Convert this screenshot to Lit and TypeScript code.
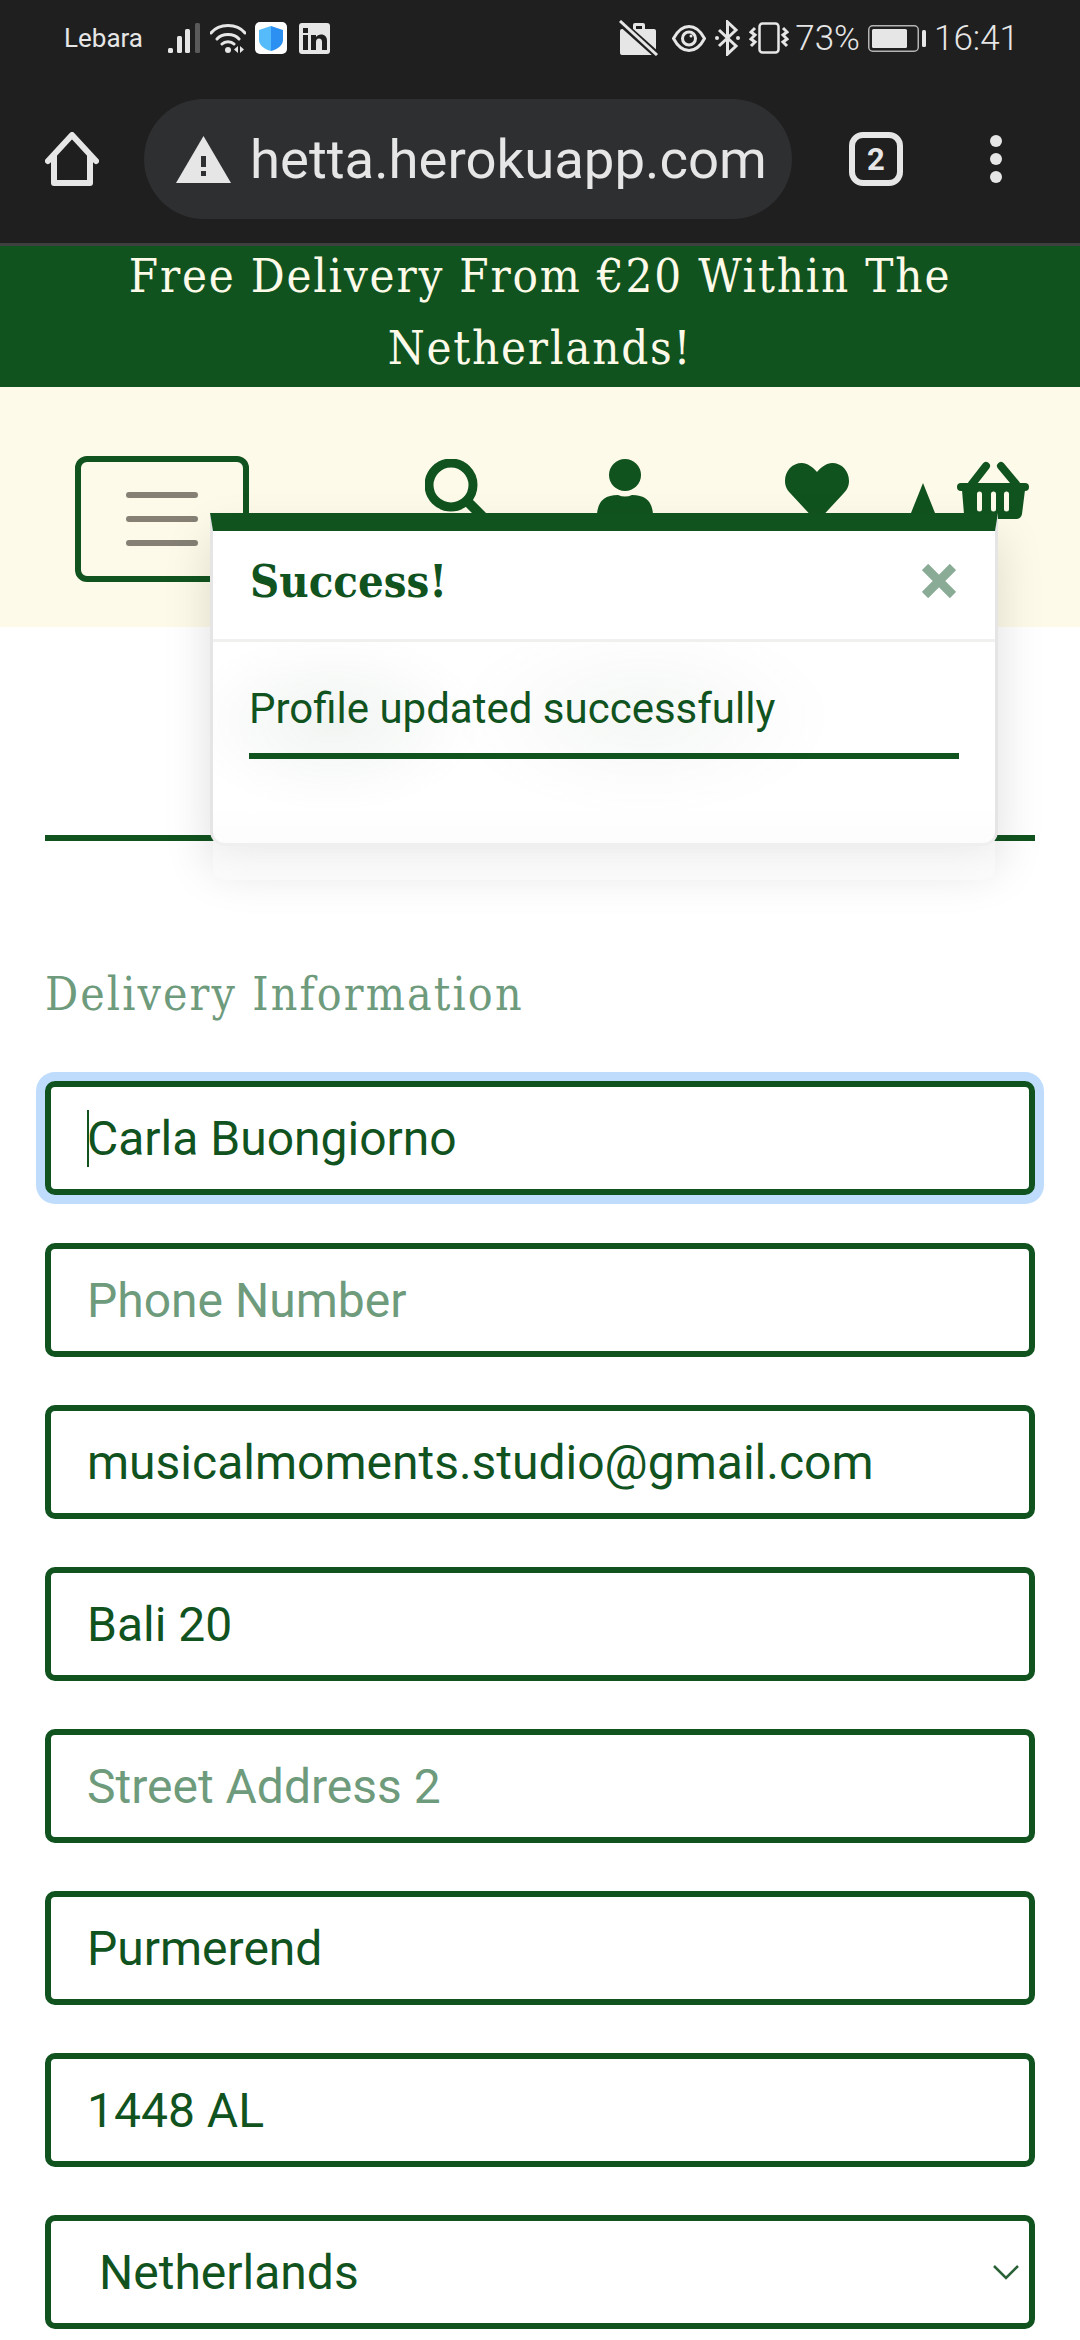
import {LitElement, css, html} from 'lit';
import {customElement} from 'lit/decorators.js';

const fields = [
  {value: 'Carla Buongiorno', placeholder: 'Full Name', focused: true},
  {value: '', placeholder: 'Phone Number'},
  {value: 'musicalmoments.studio@gmail.com', placeholder: 'Email Address'},
  {value: 'Bali 20', placeholder: 'Street Address 1'},
  {value: '', placeholder: 'Street Address 2'},
  {value: 'Purmerend', placeholder: 'Town or City'},
  {value: '1448 AL', placeholder: 'Postal Code'},
];

@customElement('app-root')
export class AppRoot extends LitElement {
  static get styles() {
    return [
      css`
        :host {
          background: #fff;
          color: #11531f;
          display: block;
          font-family: Roboto, 'Liberation Sans', sans-serif;
          height: 2340px;
          overflow: hidden;
          position: relative;
          width: 1080px;
        }
        svg {
          display: block;
          flex: none;
        }
        .chrome {
          background: #1f1f1f;
          border-bottom: 3px solid #3d3f3e;
          color: #e6e6e6;
          height: 243px;
        }
        .status {
          align-items: center;
          display: flex;
          height: 76px;
          padding-left: 64px;
        }
        .carrier {
          font-size: 26px;
          margin-right: 25px;
        }
        .spacer {
          flex: 1;
        }
        .status-text {
          font-size: 35px;
          font-weight: 300;
        }
        .percent {
          margin-left: 6px;
        }
        .clock {
          margin: 0 61px 0 8px;
        }
        .battery {
          margin-left: 8px;
        }
        .gap-9 {
          margin-left: 9px;
        }
        .gap-10 {
          margin-left: 10px;
        }
        .gap-12 {
          margin-left: 12px;
        }
        .gap-13 {
          margin-left: 13px;
        }
        .toolbar {
          align-items: center;
          display: flex;
          height: 120px;
          margin-top: 23px;
          padding-left: 45px;
        }
        .pill {
          align-items: center;
          background: #2e2f31;
          border-radius: 60px;
          box-sizing: border-box;
          display: flex;
          font-size: 54.500px;
          height: 120px;
          margin-left: 45px;
          padding-left: 32px;
          width: 648px;
        }
        .url {
          margin-left: 19px;
        }
        .tabs {
          align-items: center;
          border: 6px solid #e6e6e6;
          border-radius: 14px;
          box-sizing: border-box;
          display: flex;
          font-size: 31px;
          font-weight: 700;
          height: 54px;
          justify-content: center;
          margin-left: 57px;
          width: 54px;
        }
        .more {
          display: flex;
          flex-direction: column;
          gap: 6px;
          margin-left: 87px;
        }
        .more span {
          background: #e6e6e6;
          border-radius: 50%;
          height: 12px;
          width: 12px;
        }
        .banner {
          background: #11531f;
          color: #fefae9;
          font-family: 'DejaVu Serif Condensed', 'DejaVu Serif', serif;
          font-size: 47px;
          height: 141px;
          letter-spacing: 1.8px;
          line-height: 72px;
          overflow: hidden;
          text-align: center;
        }
        .banner div {
          margin-top: -6px;
        }
        .nav {
          background: #fefae9;
          box-sizing: border-box;
          display: flex;
          height: 240px;
          padding: 69px 0 0 75px;
        }
        .menu {
          align-items: center;
          border: 6px solid #11531f;
          border-radius: 12px;
          box-sizing: border-box;
          display: flex;
          flex-direction: column;
          flex: none;
          gap: 18px;
          height: 126px;
          justify-content: center;
          width: 174px;
        }
        .menu span {
          background: #857f74;
          border-radius: 3px;
          height: 6px;
          width: 72px;
        }
        .nav-icon {
          margin-top: 3px;
        }
        .nav-search {
          margin-left: 176px;
        }
        .nav-person {
          margin-left: 106px;
        }
        .nav-heart {
          margin-left: 132px;
        }
        .nav-arrow {
          margin-left: 62px;
        }
        .nav-basket {
          margin-left: 22px;
        }
        main {
          padding: 208px 45px 0;
        }
        .rule {
          background: #11531f;
          height: 6px;
        }
        h2 {
          color: #6f9b7d;
          font-family: 'DejaVu Serif Condensed', 'DejaVu Serif', serif;
          font-size: 46px;
          font-weight: 400;
          letter-spacing: 2.100px;
          line-height: 60px;
          margin: 123px 0 0;
        }
        form {
          display: flex;
          flex-direction: column;
          gap: 48px;
          margin-top: 57px;
        }
        .field {
          position: relative;
        }
        input,
        select {
          appearance: none;
          background: #fff;
          border: 6px solid #11531f;
          border-radius: 10px;
          box-sizing: border-box;
          color: #11531f;
          display: block;
          font-family: inherit;
          font-size: 48px;
          height: 114px;
          outline: none;
          padding: 0 36px;
          width: 100%;
        }
        input::placeholder {
          color: #6f9b7d;
          opacity: 1;
        }
        .focused {
          box-shadow: 0 0 0 9px #bfdcfd;
        }
        .caret {
          background: #11531f;
          height: 57px;
          left: 42px;
          position: absolute;
          top: 29px;
          width: 2px;
        }
        select {
          padding-left: 48px;
        }
        .chevron {
          position: absolute;
          right: 16px;
          top: 49px;
        }
        .toast {
          background: #fff;
          border: 3px solid rgba(0, 0, 0, .1);
          border-radius: 0 0 15px 15px;
          border-top: 18px solid #11531f;
          box-shadow: 0 24px 48px rgba(0, 0, 0, .13);
          box-sizing: border-box;
          height: 333px;
          left: 210px;
          position: absolute;
          top: 513px;
          width: 788px;
        }
        .toast-head {
          align-items: center;
          border-bottom: 3px solid #f0f0ee;
          box-sizing: border-box;
          display: flex;
          height: 111px;
          justify-content: space-between;
          padding: 0 39px 8px 37px;
        }
        .toast-head strong {
          font-family: 'DejaVu Serif Condensed', 'DejaVu Serif', serif;
          font-size: 45px;
          font-weight: 700;
        }
        .toast-body {
          background:
            radial-gradient(ellipse 150px 90px at 120px 80px, rgba(17, 83, 31, .06), transparent),
            radial-gradient(ellipse 190px 100px at 430px 75px, rgba(17, 83, 31, .045), transparent),
            linear-gradient(transparent 70%, #fafafa);
          border-radius: 0 0 12px 12px;
          height: 201px;
          padding: 37px 36px 0;
        }
        .toast-text {
          font-size: 42px;
          line-height: 60px;
        }
        .toast-bar {
          background: #11531f;
          height: 6px;
          margin-top: 14px;
        }
      `,
    ];
  }

  render() {
    return html`
      <div class="chrome">
        <div class="status">
          <span class="carrier">Lebara</span>
          ${this.leftStatusIcons()}
          <span class="spacer"></span>
          ${this.rightStatusIcons()}
        </div>
        <div class="toolbar">
          <svg width="54" height="54" viewBox="0 0 54 54" fill="none" stroke="#e6e6e6" stroke-width="6" stroke-linejoin="round" stroke-linecap="round">
            <path d="M3 29 27 3l24 26M9 24v27h36V24"/>
          </svg>
          <div class="pill">
            <svg width="55" height="47" viewBox="0 0 55 47">
              <path fill="#e6e6e6" d="M27.500 0 55 47H0Z"/>
              <path fill="#2e2f31" d="M25 20h5v11h-5zM25 35h5v5h-5z"/>
            </svg>
            <span class="url">hetta.herokuapp.com</span>
          </div>
          <div class="tabs">2</div>
          <div class="more"><span></span><span></span><span></span></div>
        </div>
      </div>
      <div class="banner"><div>Free Delivery From €20 Within The<br>Netherlands!</div></div>
      <div class="nav">
        <div class="menu"><span></span><span></span><span></span></div>
        ${this.navIcons()}
      </div>
      <main>
        <div class="rule"></div>
        <h2>Delivery Information</h2>
        <form>
          ${fields.map((f) => html`
            <div class="field">
              <input class=${f.focused ? 'focused' : ''} .value=${f.value} placeholder=${f.placeholder}>
              ${f.focused ? html`<span class="caret"></span>` : ''}
            </div>
          `)}
          <div class="field">
            <select><option>Netherlands</option></select>
            <svg class="chevron" width="26" height="16" viewBox="0 0 26 16" fill="none" stroke="#2a6238" stroke-width="2.500">
              <path d="M1 2l12 12L25 2"/>
            </svg>
          </div>
        </form>
      </main>
      <div class="toast">
        <div class="toast-head">
          <strong>Success!</strong>
          <svg width="34" height="34" viewBox="0 0 34 34" stroke="#8aab96" stroke-width="9">
            <path d="M3 3l28 28M31 3 3 31"/>
          </svg>
        </div>
        <div class="toast-body">
          <div class="toast-text">Profile updated successfully</div>
          <div class="toast-bar"></div>
        </div>
      </div>
    `;
  }

  leftStatusIcons() {
    return html`
      <svg width="32" height="30" viewBox="0 0 32 30">
        <rect x="0" y="25" width="5" height="5" rx="1.500" fill="#e6e6e6"/>
        <rect x="9" y="13" width="5" height="17" rx="1.500" fill="#e6e6e6"/>
        <rect x="17" y="6" width="5" height="24" rx="1.500" fill="#e6e6e6"/>
        <rect x="27" y="0" width="5" height="30" rx="1.500" fill="#5a5a5a"/>
      </svg>
      <svg class="gap-10" width="36" height="30" viewBox="0 0 36 30" fill="none" stroke="#e6e6e6" stroke-width="3" stroke-linecap="round">
        <path d="M1 10C9 0 27 0 35 10M7 16c5-6 17-6 22 0M12 21c3-3 9-3 12 0"/>
        <circle cx="18" cy="27" r="3" fill="#e6e6e6" stroke="none"/>
        <path d="M28 23v7l-4-3.500ZM30 23v7l4-3.500Z" fill="#e6e6e6" stroke="none"/>
      </svg>
      <svg class="gap-9" width="32" height="32" viewBox="0 0 32 32">
        <defs>
          <linearGradient id="shield" x1="0" x2="1" y1="0" y2="0">
            <stop offset=".5" stop-color="#55bbfb"/>
            <stop offset=".5" stop-color="#2b90f1"/>
          </linearGradient>
        </defs>
        <rect width="32" height="32" rx="5" fill="#fff"/>
        <path fill="url(#shield)" d="M16 4l12 4v10c0 5-5 9-12 11C9 27 4 23 4 18V8Z"/>
      </svg>
      <svg class="gap-12" width="31" height="31" viewBox="0 0 31 31">
        <rect width="31" height="31" rx="3" fill="#e6e6e6"/>
        <path fill="#1f1f1f" d="M4 12h5v15H4zM4 5h5v5H4zM12 12h5v2c1-1.500 3-2.500 5-2.500 4 0 6 2.500 6 6.500v9h-5v-8c0-2-1-3.500-3-3.500s-3 1.500-3 3.500v8h-5z"/>
      </svg>
    `;
  }

  rightStatusIcons() {
    return html`
      <svg width="40" height="36" viewBox="0 0 40 36">
        <path fill="#e6e6e6" d="M3 9h11V5q0-2 2-2h8q2 0 2 2v4h9q2 0 2 2v22q0 2-2 2H3q-2 0-2-2V11q0-2 2-2Zm14 0h6V6h-6Z"/>
        <path d="M0 1l38 34" stroke="#1f1f1f" stroke-width="7"/>
        <path d="M1 1l37 34" stroke="#e6e6e6" stroke-width="3"/>
      </svg>
      <svg class="gap-13" width="34" height="27" viewBox="0 0 34 27" fill="none" stroke="#e6e6e6" stroke-width="3">
        <path d="M1.500 13.500C6 5 11 1.500 17 1.500S28 5 32.500 13.500C28 22 23 25.500 17 25.500S6 22 1.500 13.500Z"/>
        <circle cx="17" cy="13.500" r="6.500"/>
        <circle cx="19" cy="11" r="1.500" fill="#e6e6e6" stroke="none"/>
      </svg>
      <svg class="gap-9" width="25" height="36" viewBox="0 0 25 36" fill="none" stroke="#e6e6e6" stroke-width="3">
        <path d="M4 10l17 16-8.500 8V2L21 10 4 26"/>
        <circle cx="2" cy="18" r="2" fill="#e6e6e6" stroke="none"/>
        <circle cx="23" cy="18" r="2" fill="#e6e6e6" stroke="none"/>
      </svg>
      <svg class="gap-9" width="40" height="32" viewBox="0 0 40 32" fill="none" stroke="#e6e6e6" stroke-width="2.500">
        <rect x="10.500" y="1.500" width="19" height="29" rx="3"/>
        <path d="M6 6 2 10l4 3-4 4 4 3-4 4M34 6l4 4-4 3 4 4-4 3 4 4" stroke-width="3"/>
      </svg>
      <span class="status-text percent">73%</span>
      <svg class="battery" width="58" height="27" viewBox="0 0 58 27">
        <rect x=".750" y=".750" width="49.500" height="25.500" rx="4" fill="none" stroke="#b4b4b4" stroke-width="1.500"/>
        <rect x="4" y="4" width="35" height="19" rx="1.500" fill="#e6e6e6"/>
        <rect x="54" y="5" width="4" height="17" rx="1.500" fill="#e6e6e6"/>
      </svg>
      <span class="status-text clock">16:41</span>
    `;
  }

  navIcons() {
    return html`
      <svg class="nav-icon nav-search" width="66" height="70" viewBox="425 459 66 70">
        <circle cx="451" cy="485" r="22" fill="none" stroke="#11531f" stroke-width="9"/>
        <path d="M470 504l18 18" stroke="#11531f" stroke-width="10" stroke-linecap="round"/>
      </svg>
      <svg class="nav-icon nav-person" width="56" height="70" viewBox="597 459 56 70" fill="#11531f">
        <circle cx="625" cy="475" r="16"/>
        <path d="M597 529v-13q0-21 21-21 7 3 14 0 21 0 21 21v13Z"/>
      </svg>
      <svg class="nav-icon nav-heart" width="64" height="70" viewBox="785 459 64 70" fill="#11531f">
        <path d="M817 472c-4-5-10-9-15-9-10 0-17 8-17 18 0 6 3 10 6 13l26 28 26-28c3-3 6-7 6-13 0-10-7-18-17-18-5 0-11 4-15 9Z"/>
      </svg>
      <svg class="nav-icon nav-arrow" width="24" height="70" viewBox="911 459 24 70" fill="#11531f">
        <path d="M923 483l-12 30v16h24v-16Z"/>
      </svg>
      <svg class="nav-icon nav-basket" width="72" height="70" viewBox="957 459 72 70">
        <path d="M972 484l14-18M1016 484l-15-18" stroke="#11531f" stroke-width="8" stroke-linecap="round"/>
        <rect x="957" y="483" width="72" height="8" rx="4" fill="#11531f"/>
        <path d="M962 490h63l-3 24q-1 5-6 5h-46q-5 0-6-5Z" fill="#11531f"/>
        <path d="M979.500 494v15M993.500 494v15M1006.500 494v15" stroke="#fefae9" stroke-width="5" stroke-linecap="round"/>
      </svg>
    `;
  }
}
